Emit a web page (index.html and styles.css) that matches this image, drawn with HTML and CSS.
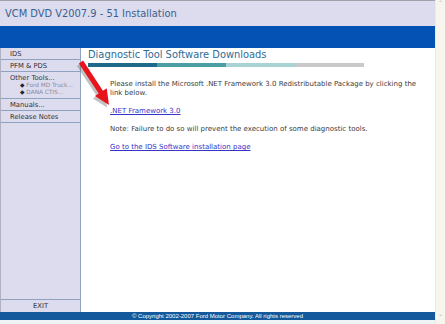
FILE: index.html
```html
<!DOCTYPE html>
<html lang="en">
<head>
  <meta charset="UTF-8">
  <title>VCM DVD V2007.9 - 51 Installation</title>
  <link rel="stylesheet" href="styles.css">
</head>
<body>

<div class="window">
  <div class="title">VCM DVD V2007.9 - 51 Installation</div>
  <div class="bluebar"></div>

  <div class="middle">
    <div class="sidebar">
      <div class="item">IDS</div>
      <div class="item">PFM &amp; PDS</div>
      <div class="item">
        Other Tools...
        <div class="sub"><b>&#9670;</b> Ford MD Truck...</div>
        <div class="sub"><b>&#9670;</b> DANA CTIS...</div>
      </div>
      <div class="item">Manuals...</div>
      <div class="item">Release Notes</div>
      <div class="spacer"></div>
      <div class="item exit">EXIT</div>
    </div>

    <div class="main">
      <h1>Diagnostic Tool Software Downloads</h1>
      <div class="stripe">
        <span class="s1"></span><span class="s2"></span><span class="s3"></span><span class="s4"></span>
      </div>
      <div class="content">
        <p>Please install the Microsoft .NET Framework 3.0 Redistributable Package by clicking the link below.</p>
        <p><a href="#">.NET Framework 3.0</a></p>
        <p>Note: Failure to do so will prevent the execution of some diagnostic tools.</p>
        <p><a href="#">Go to the IDS Software installation page</a></p>
      </div>
    </div>
  </div>

  <div class="footer">&copy; Copyright 2002-2007 Ford Motor Company. All rights reserved</div>
  <div class="bottom"></div>

  <!-- red arrow pasted over the screenshot -->
  <svg class="arrow" width="50" height="60" viewBox="0 0 50 60">
    <path d="M7.9 7.4 L12.1 4.6 L31.9 34.8 L35.7 32.3 L38 49 L23.9 40.1 L27.7 37.6 Z"
          fill="#666" opacity="0.4" transform="translate(-2,2.5)"/>
    <path d="M7.9 7.4 L12.1 4.6 L31.9 34.8 L35.7 32.3 L38 49 L23.9 40.1 L27.7 37.6 Z" fill="#e8141c"/>
  </svg>
</div>

<div class="scrollbar">
  <div class="btn">&#710;</div>
  <div class="track"></div>
  <div class="btn">&#711;</div>
</div>

</body>
</html>
```

FILE: styles.css
```css
* {
  box-sizing: border-box;
}

body {
  margin: 0;
  width: 445px;
  height: 324px;
  display: flex;
  overflow: hidden;
  font-family: 'DejaVu Sans', Verdana, sans-serif;
  background-color: #fff;
}

.window {
  flex: 1;
  display: flex;
  flex-direction: column;
  position: relative;
  border-top: 1px solid #a0a0a8;
}

.title {
  height: 25px;
  background-color: #dcdcee;
  color: #3a6090;
  font-size: 9.9px;
  padding: 7px 0 0 5px;
}

.bluebar {
  height: 22px;
  background-color: #0453b4;
}

.middle {
  flex: 1;
  display: flex;
}

.sidebar {
  width: 81px;
  background-color: #dddcef;
  border-left: 1px solid #b0b0c0;
  border-right: 1px solid #8fa2bf;
  display: flex;
  flex-direction: column;
  font-size: 6.8px;
  color: #333;
}

.item {
  border-bottom: 1px solid #8fa2bf;
  padding: 2px 0 2px 9px;
  height: 12px;
}

.item:nth-child(3) {
  height: 27px;
}

.sub {
  color: #8a8a9a;
  font-size: 5.8px;
  padding-left: 10px;
  line-height: 7px;
}

.sub b {
  color: #222;
  font-weight: normal;
}

.spacer {
  flex: 1;
}

.exit {
  border-top: 1px solid #8fa2bf;
  border-bottom: none;
  text-align: center;
  padding: 2px 0 0;
  height: 13px;
}

.main {
  flex: 1;
  padding: 1px 0 0 7px;
}

h1 {
  margin: 0;
  font-weight: normal;
  font-size: 9.9px;
  color: #2f6b95;
  height: 13px;
}

.stripe {
  display: flex;
  height: 4px;
  margin-top: 1px;
}

.stripe span {
  width: 69px;
}

.s1 { background-color: #1f6a8a; }
.s2 { background-color: #4a9ea4; }
.s3 { background-color: #a9d2d4; }
.s4 { background-color: #c9c9c9; }

.content {
  padding: 13px 12px 0 22px;
  font-size: 7px;
  color: #3c3c3c;
  line-height: 9px;
}

.content p {
  margin: 0 0 9px;
}

.content a {
  color: #3434c8;
}

.footer {
  height: 8px;
  background-color: #13599c;
  color: #fff;
  font-family: 'Liberation Sans', Arial, sans-serif;
  font-size: 6px;
  line-height: 8px;
  text-align: center;
}

.bottom {
  height: 4px;
  background-color: #eef3f3;
}

.arrow {
  position: absolute;
  left: 71px;
  top: 55px;
}

.scrollbar {
  width: 10px;
  background-color: #f7f6ee;
  border-left: 1px solid #ecebe0;
  display: flex;
  flex-direction: column;
}

.scrollbar .btn {
  height: 10px;
  font-size: 8px;
  line-height: 12px;
  text-align: center;
  color: #b8b8b0;
}

.scrollbar .track {
  flex: 1;
}
```
